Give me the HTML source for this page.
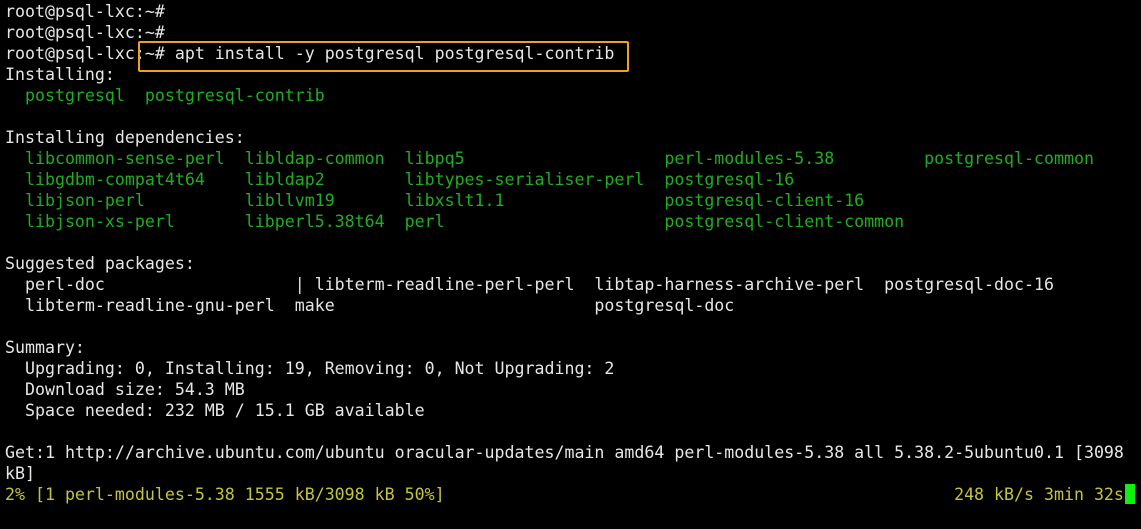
<!DOCTYPE html>
<html><head><style>
html,body{margin:0;padding:0;background:#000;width:1141px;height:529px;overflow:hidden}
pre{margin:0;position:absolute;left:5px;top:1px;font-family:"DejaVu Sans Mono","Liberation Mono",monospace;font-size:16.6px;line-height:21px;color:#e6e6e6}
.g{color:#1fae1f}.y{color:#c4c43c}
.box{position:absolute;left:138px;top:41px;width:487px;height:27px;border:2px solid #f0a020;border-radius:2px}
.cur{position:absolute;left:1125px;top:484px;width:10px;height:20px;background:#11ee11}
</style></head><body>
<pre>root@psql-lxc:~#
root@psql-lxc:~#
root@psql-lxc:~# apt install -y postgresql postgresql-contrib
Installing:
<span class="g">  postgresql  postgresql-contrib</span>

Installing dependencies:
<span class="g">  libcommon-sense-perl  libldap-common  libpq5                    perl-modules-5.38         postgresql-common
  libgdbm-compat4t64    libldap2        libtypes-serialiser-perl  postgresql-16
  libjson-perl          libllvm19       libxslt1.1                postgresql-client-16
  libjson-xs-perl       libperl5.38t64  perl                      postgresql-client-common</span>

Suggested packages:
  perl-doc                   | libterm-readline-perl-perl  libtap-harness-archive-perl  postgresql-doc-16
  libterm-readline-gnu-perl  make                          postgresql-doc

Summary:
  Upgrading: 0, Installing: 19, Removing: 0, Not Upgrading: 2
  Download size: 54.3 MB
  Space needed: 232 MB / 15.1 GB available

Get:1 http://archive.ubuntu.com/ubuntu oracular-updates/main amd64 perl-modules-5.38 all 5.38.2-5ubuntu0.1 [3098
kB]
<span class="y">2% [1 perl-modules-5.38 1555 kB/3098 kB 50%]                                                   248 kB/s 3min 32s</span></pre>
<div class="box"></div>
<div class="cur"></div>
</body></html>
